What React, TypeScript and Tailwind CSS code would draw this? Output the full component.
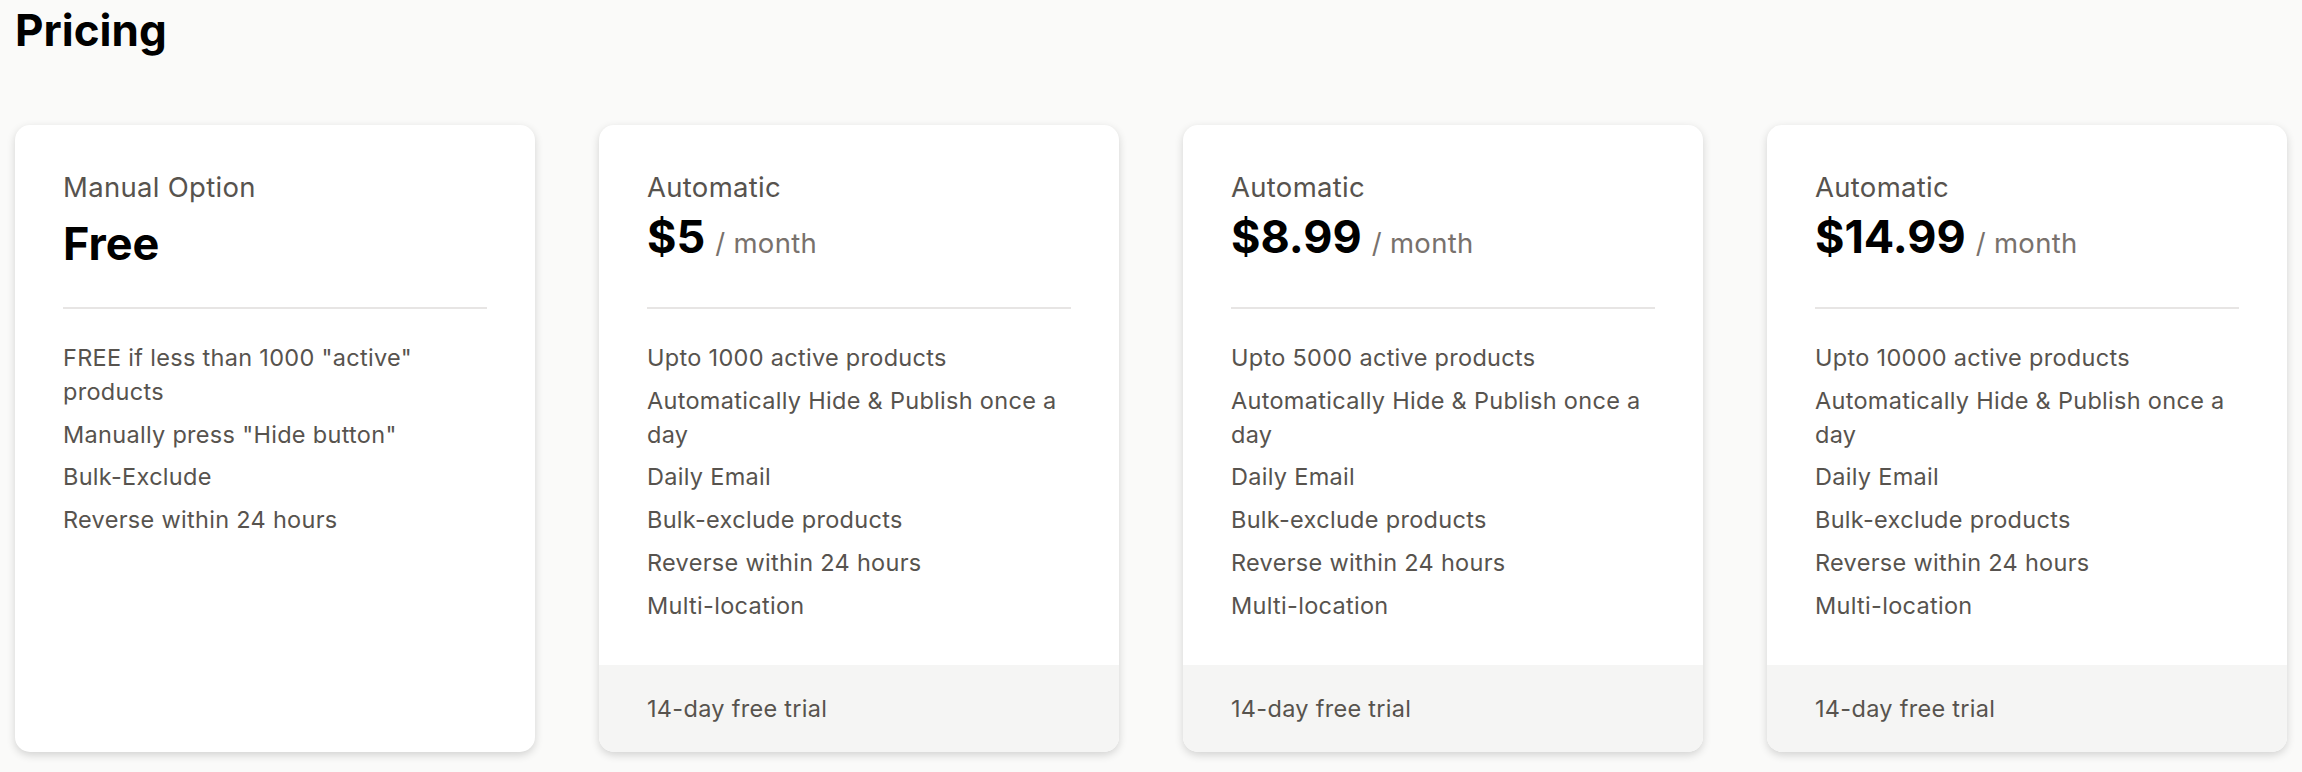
const plans = [
  {
    name: "Manual Option",
    price: "Free",
    period: null,
    features: [
      'FREE if less than 1000 "active" products',
      'Manually press "Hide button"',
      "Bulk-Exclude",
      "Reverse within 24 hours",
    ],
    trial: null,
  },
  {
    name: "Automatic",
    price: "$5",
    period: "/ month",
    features: [
      "Upto 1000 active products",
      "Automatically Hide & Publish once a day",
      "Daily Email",
      "Bulk-exclude products",
      "Reverse within 24 hours",
      "Multi-location",
    ],
    trial: "14-day free trial",
  },
  {
    name: "Automatic",
    price: "$8.99",
    period: "/ month",
    features: [
      "Upto 5000 active products",
      "Automatically Hide & Publish once a day",
      "Daily Email",
      "Bulk-exclude products",
      "Reverse within 24 hours",
      "Multi-location",
    ],
    trial: "14-day free trial",
  },
  {
    name: "Automatic",
    price: "$14.99",
    period: "/ month",
    features: [
      "Upto 10000 active products",
      "Automatically Hide & Publish once a day",
      "Daily Email",
      "Bulk-exclude products",
      "Reverse within 24 hours",
      "Multi-location",
    ],
    trial: "14-day free trial",
  },
];

export default function App() {
  return (
    <div className="min-h-screen bg-[#fafaf9] px-[15px] pt-[3px] pb-5 font-['Inter',sans-serif]">
      <h1 className="text-[44px] leading-[54px] font-bold text-black">Pricing</h1>

      <div className="mt-[68px] grid grid-cols-4 gap-[64px]">
        {plans.map((plan, i) => (
          <div
            key={i}
            className="flex flex-col overflow-hidden rounded-[15px] bg-white shadow-[0_3px_8px_rgba(0,0,0,0.16)]"
          >
            <div className="flex-1 px-[48px] pt-[42px] pb-[43px]">
              <p className="text-[27.5px] leading-[40px] tracking-[0.3px] text-[#57534e]">{plan.name}</p>
              {plan.period ? (
                <div className="mt-[3px] flex items-baseline gap-[10px]">
                  <span className="text-[45px] leading-[54px] font-bold text-black">{plan.price}</span>
                  <span className="text-[27.5px] leading-[40px] tracking-[0.3px] text-[#78716c]">
                    {plan.period}
                  </span>
                </div>
              ) : (
                <div className="mt-[10px] flex items-baseline">
                  <span className="text-[45px] leading-[54px] font-bold text-black">{plan.price}</span>
                </div>
              )}
              <div className={`h-[2px] bg-[#e7e5e4] ${plan.period ? "mt-[43px]" : "mt-[36px]"}`} />
              <ul className="mt-[32px] flex flex-col gap-[9px]">
                {plan.features.map((f) => (
                  <li key={f} className="text-[23.5px] leading-[33.75px] tracking-[0.3px] text-[#57534e]">
                    {f}
                  </li>
                ))}
              </ul>
            </div>
            {plan.trial && (
              <div className="flex h-[87px] items-center bg-[#f5f5f4] px-[48px]">
                <p className="text-[23.5px] leading-[33.75px] tracking-[0.3px] text-[#57534e]">{plan.trial}</p>
              </div>
            )}
          </div>
        ))}
      </div>
    </div>
  );
}
